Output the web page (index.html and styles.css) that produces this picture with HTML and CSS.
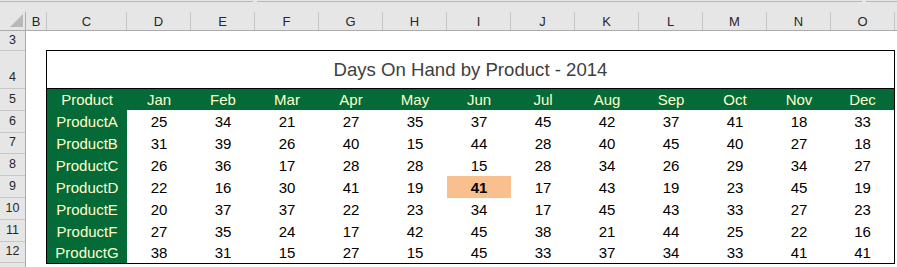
FILE: index.html
```html
<!DOCTYPE html>
<html lang="en">
<head>
<meta charset="utf-8">
<title>Days On Hand by Product - 2014</title>
<link rel="stylesheet" href="styles.css">
</head>
<body>
<div class="excel">
  <div class="topstrip">
    <span class="seg s1"></span><span class="seg s2"></span><span class="seg s3"></span>
  </div>
  <div class="colhead">
    <div class="corner"><svg class="tri" width="13" height="13" viewBox="0 0 13 13"><polygon points="13,0 13,13 0,13" fill="#b8b8b8"/></svg></div>
    <div class="ch">B</div>
    <div class="ch">C</div>
    <div class="ch">D</div>
    <div class="ch">E</div>
    <div class="ch">F</div>
    <div class="ch">G</div>
    <div class="ch">H</div>
    <div class="ch">I</div>
    <div class="ch">J</div>
    <div class="ch">K</div>
    <div class="ch">L</div>
    <div class="ch">M</div>
    <div class="ch">N</div>
    <div class="ch">O</div>
    <div class="ch last"></div>
  </div>
  <div class="sheet">
    <div class="rowhead">
      <div class="rh r3">3</div>
      <div class="rh r4">4</div>
      <div class="rh">5</div>
      <div class="rh">6</div>
      <div class="rh">7</div>
      <div class="rh">8</div>
      <div class="rh">9</div>
      <div class="rh">10</div>
      <div class="rh">11</div>
      <div class="rh r12">12</div>
      <div class="rh r13"></div>
    </div>
    <div class="canvas">
      <div class="report">
        <div class="title">Days On Hand by Product - 2014</div>
        <div class="grid">
          <div class="hd">Product</div><div class="hd">Jan</div><div class="hd">Feb</div><div class="hd">Mar</div><div class="hd">Apr</div><div class="hd">May</div><div class="hd">Jun</div><div class="hd">Jul</div><div class="hd">Aug</div><div class="hd">Sep</div><div class="hd">Oct</div><div class="hd">Nov</div><div class="hd">Dec</div>

          <div class="pn">ProductA</div><div class="v">25</div><div class="v">34</div><div class="v">21</div><div class="v">27</div><div class="v">35</div><div class="v">37</div><div class="v">45</div><div class="v">42</div><div class="v">37</div><div class="v">41</div><div class="v">18</div><div class="v">33</div>

          <div class="pn">ProductB</div><div class="v">31</div><div class="v">39</div><div class="v">26</div><div class="v">40</div><div class="v">15</div><div class="v">44</div><div class="v">28</div><div class="v">40</div><div class="v">45</div><div class="v">40</div><div class="v">27</div><div class="v">18</div>

          <div class="pn">ProductC</div><div class="v">26</div><div class="v">36</div><div class="v">17</div><div class="v">28</div><div class="v">28</div><div class="v">15</div><div class="v">28</div><div class="v">34</div><div class="v">26</div><div class="v">29</div><div class="v">34</div><div class="v">27</div>

          <div class="pn">ProductD</div><div class="v">22</div><div class="v">16</div><div class="v">30</div><div class="v">41</div><div class="v">19</div><div class="v hot">41</div><div class="v">17</div><div class="v">43</div><div class="v">19</div><div class="v">23</div><div class="v">45</div><div class="v">19</div>

          <div class="pn">ProductE</div><div class="v">20</div><div class="v">37</div><div class="v">37</div><div class="v">22</div><div class="v">23</div><div class="v">34</div><div class="v">17</div><div class="v">45</div><div class="v">43</div><div class="v">33</div><div class="v">27</div><div class="v">23</div>

          <div class="pn">ProductF</div><div class="v">27</div><div class="v">35</div><div class="v">24</div><div class="v">17</div><div class="v">42</div><div class="v">45</div><div class="v">38</div><div class="v">21</div><div class="v">44</div><div class="v">25</div><div class="v">22</div><div class="v">16</div>

          <div class="pn">ProductG</div><div class="v">38</div><div class="v">31</div><div class="v">15</div><div class="v">27</div><div class="v">15</div><div class="v">45</div><div class="v">33</div><div class="v">37</div><div class="v">34</div><div class="v">33</div><div class="v">41</div><div class="v">41</div>
        </div>
      </div>
    </div>
  </div>
</div>
</body>
</html>
```
FILE: styles.css
```css
* { box-sizing: border-box; }

html, body {
  margin: 0;
  padding: 0;
  background: #ffffff;
}

body {
  width: 897px;
  height: 267px;
  overflow: hidden;
  font-family: "Liberation Sans", Arial, sans-serif;
}

.excel {
  width: 897px;
  height: 267px;
  overflow: hidden;
}

/* thin strip above the column headers */
.topstrip {
  height: 12px;
  background: #e6e6e6;
  display: flex;
  gap: 4px;
  padding-top: 1px;
  align-items: flex-start;
}
.seg {
  display: block;
  height: 1px;
  background: #b9b9b9;
}
.s1 { width: 253px; }
.s2 { width: 605px; }
.s3 { flex: 1; }

/* column headers */
.colhead {
  height: 19px;
  display: grid;
  grid-template-columns: 26px 21px 80px repeat(12, 64px) 1fr;
  background: #e6e6e6;
  border-bottom: 1px solid #ababab;
}
.corner {
  border-right: 1px solid #ababab;
  display: flex;
  justify-content: flex-end;
  align-items: flex-end;
  padding: 0 2px 3px 0;
}
.tri { display: block; }
.ch {
  border-right: 1px solid #c6c6c6;
  display: flex;
  align-items: center;
  justify-content: center;
  font-size: 13px;
  color: #262626;
  padding-top: 1px;
}
.ch.last { border-right: none; }

/* sheet body */
.sheet {
  display: flex;
  height: 236px;
}
.rowhead {
  width: 26px;
  flex: none;
  background: #e6e6e6;
  border-right: 1px solid #ababab;
  display: flex;
  flex-direction: column;
}
.rh {
  height: 22px;
  border-bottom: 1px solid #c6c6c6;
  display: flex;
  align-items: flex-end;
  justify-content: center;
  font-size: 12.5px;
  color: #262626;
  padding-bottom: 4px;
  line-height: 13px;
}
.rh.r3 { height: 20px; padding-bottom: 3px; }
.rh.r4 { height: 38px; }
.rh.r12 { height: 21px; }
.rh.r13 { flex: 1; border-bottom: none; }

.canvas {
  flex: 1;
  padding: 19px 0 0 20px;
}

/* the report block */
.report {
  width: 849px;
  border: 1px solid #000000;
  background: #ffffff;
}
.title {
  height: 38px;
  border-bottom: 1px solid #000000;
  text-align: center;
  font-size: 18.6px;
  line-height: 22px;
  padding-top: 8px;
  color: #404040;
}
.grid {
  display: grid;
  grid-template-columns: 80px repeat(11, 64px) 63px;
  grid-template-rows: 21px repeat(6, 22px) 21px;
  font-size: 15px;
}
.grid > div {
  display: flex;
  align-items: center;
  justify-content: center;
  white-space: nowrap;
}
.hd, .pn {
  background: #046a38;
  color: #ffffcc;
}
.v {
  color: #000000;
}
.hot {
  background: #f9bf8f;
  font-weight: bold;
}
```
